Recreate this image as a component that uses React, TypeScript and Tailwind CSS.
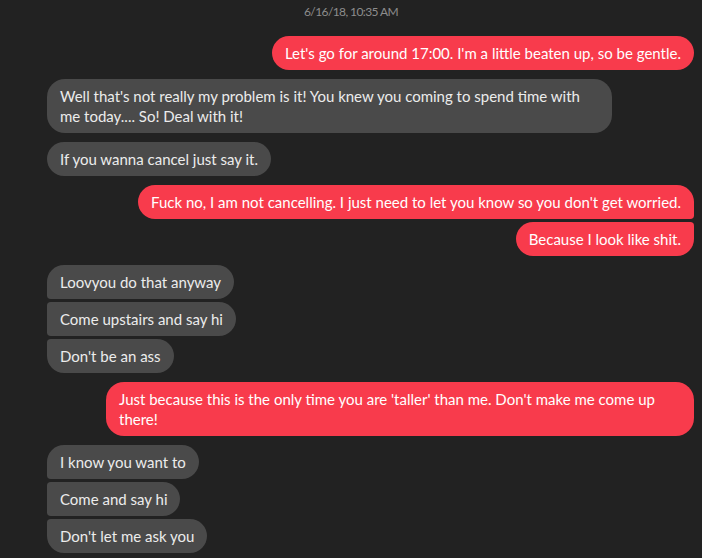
import React from 'react';

type Msg = { me: boolean; lines: string[]; w?: string };

const groups: Msg[][] = [
  [{ me: true, lines: ["Let's go for around 17:00. I'm a little beaten up, so be gentle."] }],
  [
    {
      me: false,
      w: 'w-[565px]',
      lines: ["Well that's not really my problem is it! You knew you coming to spend time with", 'me today.... So! Deal with it!'],
    },
  ],
  [{ me: false, lines: ['If you wanna cancel just say it.'] }],
  [
    { me: true, lines: ["Fuck no, I am not cancelling. I just need to let you know so you don't get worried."] },
    { me: true, lines: ['Because I look like shit.'] },
  ],
  [
    { me: false, lines: ['Loovyou do that anyway'] },
    { me: false, lines: ['Come upstairs and say hi'] },
    { me: false, lines: ["Don't be an ass"] },
  ],
  [
    {
      me: true,
      w: 'w-[588px]',
      lines: ["Just because this is the only time you are 'taller' than me. Don't make me come up", 'there!'],
    },
  ],
  [
    { me: false, lines: ['I know you want to'] },
    { me: false, lines: ['Come and say hi'] },
    { me: false, lines: ["Don't let me ask you"] },
  ],
];

const cornerClass = (me: boolean, first: boolean, last: boolean) => {
  if (me) {
    return [first ? 'rounded-tr-[18px]' : 'rounded-tr-[4px]', last ? 'rounded-br-[18px]' : 'rounded-br-[4px]'].join(' ');
  }
  return [first ? 'rounded-tl-[18px]' : 'rounded-tl-[4px]', last ? 'rounded-bl-[18px]' : 'rounded-bl-[4px]'].join(' ');
};

const Bubble: React.FC<{ msg: Msg; first: boolean; last: boolean }> = ({ msg, first, last }) => (
  <div className={`flex ${msg.me ? 'justify-end' : 'justify-start'}`}>
    <div
      className={`rounded-[18px] px-[13px] py-[7px] text-[15px] leading-[20px] whitespace-nowrap ${msg.w ?? ''} ${cornerClass(
        msg.me,
        first,
        last
      )} ${msg.me ? 'bg-[#f83b4c] text-white' : 'bg-[#4a4a4a] text-[#ececec]'}`}
    >
      {msg.lines.map((l, i) => (
        <div key={i}>{l}</div>
      ))}
    </div>
  </div>
);

export default function App() {
  return (
    <div className="w-[702px] h-[558px] overflow-hidden bg-[#222222] font-['Lato',sans-serif]">
      <div className="pt-[4px] text-center text-[12px] leading-[16px] text-[#8d8d8d] tracking-[-0.6px]">6/16/18, 10:35 AM</div>
      <div className="flex flex-col gap-[9px] pl-[47px] pr-[8px] pt-[16px]">
        {groups.map((g, gi) => (
          <div key={gi} className="flex flex-col gap-[3px]">
            {g.map((m, mi) => (
              <Bubble key={mi} msg={m} first={mi === 0} last={mi === g.length - 1} />
            ))}
          </div>
        ))}
      </div>
    </div>
  );
}
